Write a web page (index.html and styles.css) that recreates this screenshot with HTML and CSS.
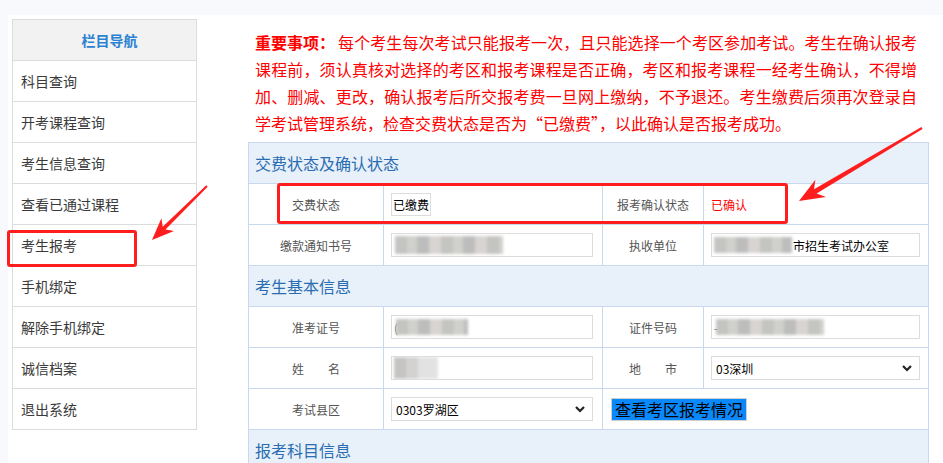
FILE: index.html
```html
<!DOCTYPE html>
<html lang="zh-CN">
<head>
<meta charset="utf-8">
<title>考生报考</title>
<link rel="stylesheet" href="styles.css">
</head>
<body>
<div class="page">
  <nav class="sidebar">
    <div class="side-head">栏目导航</div>
    <a class="side-item">科目查询</a>
    <a class="side-item">开考课程查询</a>
    <a class="side-item">考生信息查询</a>
    <a class="side-item">查看已通过课程</a>
    <a class="side-item">考生报考</a>
    <a class="side-item">手机绑定</a>
    <a class="side-item">解除手机绑定</a>
    <a class="side-item">诚信档案</a>
    <a class="side-item">退出系统</a>
  </nav>
  <main class="main">
    <p class="notice"><b class="key">重要事项：</b>每个考生每次考试只能报考一次，且只能选择一个考区参加考试。考生在确认报考课程前，须认真核对选择的考区和报考课程是否正确，考区和报考课程一经考生确认，不得增加、删减、更改，确认报考后所交报考费一旦网上缴纳，不予退还。考生缴费后须再次登录自学考试管理系统，检查交费状态是否为“已缴费”，以此确认是否报考成功。</p>
    <div class="form">
      <div class="sec">交费状态及确认状态</div>
      <div class="lbl">交费状态</div>
      <div class="val"><span class="box small">已缴费</span></div>
      <div class="lbl">报考确认状态</div>
      <div class="val"><span class="red">已确认</span></div>

      <div class="lbl">缴款通知书号</div>
      <div class="val"><span class="box left"><i class="blur b1"></i></span></div>
      <div class="lbl">执收单位</div>
      <div class="val"><span class="box right"><i class="blur b2"></i>市招生考试办公室</span></div>

      <div class="sec">考生基本信息</div>
      <div class="lbl">准考证号</div>
      <div class="val"><span class="box left"><span class="pre">(</span><i class="blur b3"></i></span></div>
      <div class="lbl">证件号码</div>
      <div class="val"><span class="box right"><span class="pre">-</span><i class="blur b4"></i></span></div>

      <div class="lbl">姓&emsp;&emsp;名</div>
      <div class="val"><span class="box left"><i class="blur b5"></i></span></div>
      <div class="lbl">地&emsp;&emsp;市</div>
      <div class="val"><span class="box right sel">03深圳<svg class="chev" viewBox="0 0 10 7" width="10" height="7"><path d="M1 1 L5 5 L9 1" fill="none" stroke="#222" stroke-width="2.2"/></svg></span></div>

      <div class="lbl">考试县区</div>
      <div class="val"><span class="box left sel">0303罗湖区<svg class="chev" viewBox="0 0 10 7" width="10" height="7"><path d="M1 1 L5 5 L9 1" fill="none" stroke="#222" stroke-width="2.2"/></svg></span></div>
      <div class="val wide"><button class="btn">查看考区报考情况</button></div>

      <div class="sec">报考科目信息</div>
    </div>
  </main>
</div>
<div class="mark mark-side"></div>
<div class="mark mark-form"></div>
<svg class="arrows" width="943" height="463" viewBox="0 0 943 463">
  <polygon fill="#ff1d1d" points="152,240 174,231 165.5,229.5 207.7,186.7 206.3,185.3 162.7,226.7 161.4,218.2"/>
  <polygon fill="#ff1d1d" points="799,201 826,197 816.6,193.5 922.5,128.9 921.5,127.1 814,189.2 815.4,179.7"/>
</svg>
</body>
</html>
```
FILE: styles.css
```css
html, body {
  margin: 0;
  padding: 0;
}
body {
  background: #f8f9fd;
  font-family: "Noto Sans CJK SC", "Noto Sans", "Liberation Sans", sans-serif;
  width: 943px;
  height: 463px;
  overflow: hidden;
  position: relative;
}
.page {
  margin: 15px 0 0 8px;
  background: #fff;
  height: 448px;
  display: flex;
  align-items: flex-start;
}
.sidebar {
  margin: 4px 0 0 4px;
  width: 183px;
  border: 1px solid #dcdcdc;
  display: flex;
  flex-direction: column;
}
.side-head {
  height: 40px;
  background: #f2f2f2;
  color: #2a82d2;
  font-size: 14px;
  font-weight: bold;
  line-height: 40px;
  text-align: center;
  padding-left: 10px;
}
.side-item {
  height: 40px;
  border-top: 1px solid #dcdcdc;
  padding-left: 8px;
  font-size: 14px;
  line-height: 40px;
  color: #3a3a3a;
}
.main {
  margin-left: 51px;
  width: 681px;
}
.notice {
  margin: 14px 0 0 7px;
  width: 662px;
  font-size: 16px;
  line-height: 27px;
  color: #ff0000;
  text-align: justify;
}
.notice .key {
  font-weight: bold;
  display: inline-block;
  margin-right: 3px;
}
.form {
  margin-top: 5px;
  display: grid;
  grid-template-columns: 135px 219px 101px 225px;
  grid-auto-rows: 41px;
  border-top: 1px solid #c8d8ee;
  border-left: 1px solid #c8d8ee;
}
.form > div {
  box-sizing: border-box;
  border-right: 1px solid #c8d8ee;
  border-bottom: 1px solid #c8d8ee;
  display: flex;
  align-items: center;
}
.form > .sec {
  grid-column: 1 / -1;
  background: #e8f0f9;
  color: #2a6db3;
  font-size: 16px;
  padding-left: 6px;
}
.form > .lbl {
  justify-content: center;
  font-size: 12px;
  color: #555;
}
.form > .val {
  padding-left: 7px;
  font-size: 12px;
  color: #000;
}
.form > .val.wide {
  grid-column: span 2;
  padding-left: 8px;
}
.box {
  box-sizing: border-box;
  height: 24px;
  border: 1px solid #dcdcdc;
  background: #fff;
  display: flex;
  align-items: center;
  padding-left: 2px;
  font-size: 12px;
  color: #000;
  white-space: nowrap;
  overflow: hidden;
}
.box.small {
  width: 40px;
  height: 23px;
  padding-left: 1px;
}
.box.left { width: 202px; }
.box.right { width: 209px; }
.red { color: #ff0000; padding-left: 0; }
.pre { color: #555; margin-right: -2px; }
.sel {
  padding-left: 4px;
  position: relative;
}
.chev {
  position: absolute;
  right: 7px;
  top: 8px;
}
.blur {
  display: inline-block;
  height: 16px;
  filter: blur(1.6px);
  background: repeating-linear-gradient(90deg, #c4c4c2 0 12px, #d0d0cc 12px 22px, #bdbdbd 22px 34px, #d8d4d2 34px 46px);
}
.b1 { width: 108px; margin-left: 1px; height: 18px; }
.b2 { width: 78px; margin-right: 1px; }
.b3 { width: 72px; }
.b4 { width: 108px; }
.b5 { width: 44px; height: 22px; background: repeating-linear-gradient(90deg, #c6c4c2 0 12px, #d2d2d0 12px 24px, #e2e2e2 24px 44px); }
.btn {
  height: 23px;
  padding: 0 3px;
  background: #0a89fc;
  border: 1px solid #cfcfcf;
  font-family: "Noto Sans CJK SC", "Noto Sans", sans-serif;
  font-size: 16px;
  line-height: 20px;
  color: #000;
}
.mark {
  position: absolute;
  box-sizing: border-box;
  border: 3px solid #ff1d1d;
  border-radius: 3px;
}
.mark-side {
  left: 7px;
  top: 230px;
  width: 130px;
  height: 37px;
}
.mark-form {
  left: 277px;
  top: 183px;
  width: 511px;
  height: 41px;
}
.arrows {
  position: absolute;
  left: 0;
  top: 0;
  pointer-events: none;
}
```
